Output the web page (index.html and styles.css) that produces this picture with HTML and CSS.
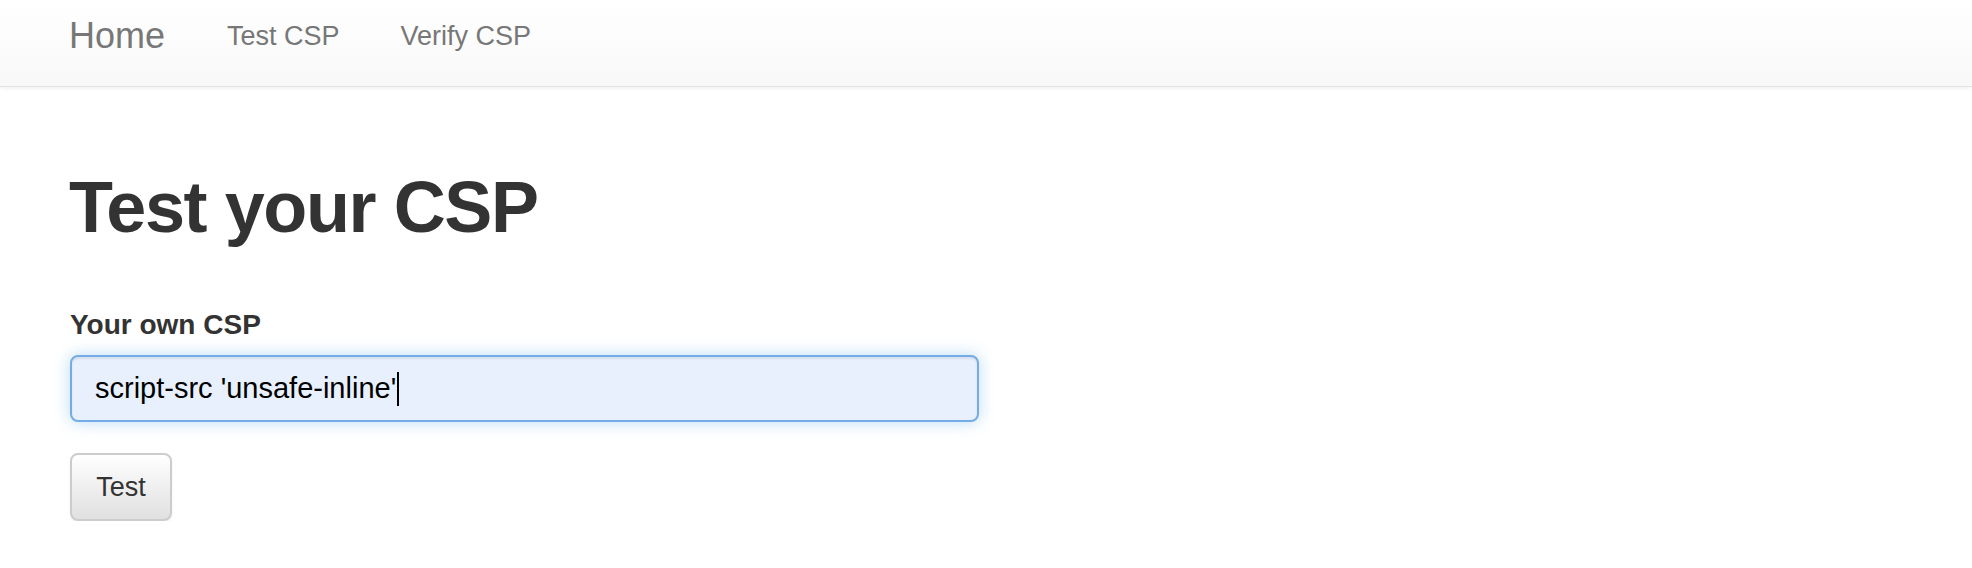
FILE: index.html
```html
<!DOCTYPE html>
<html>
  <head>
    <meta name="viewport" content="width=device-width, initial-scale=1" />
    <link rel="stylesheet" href="styles.css">
  </head>
  <body>
    <nav class="navbar">
      <a href="/" class="brand">Home</a>
      <a href="/test" class="nav-link">Test CSP</a>
      <a href="/verify" class="nav-link">Verify CSP</a>
    </nav>

    <div class="container">
      <h1>Test your CSP</h1>
      <form action="/test">
        <label for="csp">Your own CSP</label>
        <div class="form-control" id="csp">
          <span>script-src 'unsafe-inline'</span><span class="caret"></span>
        </div>
        <button type="submit" class="btn">Test</button>
      </form>
    </div>
  </body>
</html>
```

FILE: styles.css
```css
* {
  box-sizing: border-box;
}

body {
  margin: 0;
  background: #fff;
  font-family: "Liberation Sans", Arial, sans-serif;
  color: #333;
}

.navbar {
  display: flex;
  align-items: flex-start;
  gap: 61px;
  height: 87px;
  padding-left: 69px;
  background: linear-gradient(to bottom, #fff 0%, #f8f8f8 100%);
  border-bottom: 1px solid #e3e3e3;
  box-shadow: 0 1px 5px rgba(0, 0, 0, 0.075);
}

.navbar a {
  color: #777;
  text-decoration: none;
}

.brand {
  margin-top: 18px;
  font-size: 36px;
  line-height: 36px;
  margin-right: 1px;
}

.nav-link {
  margin-top: 23px;
  font-size: 27px;
  line-height: 27px;
}

.container {
  padding-left: 70px;
}

h1 {
  margin: 80px 0 0 -1px;
  font-size: 72px;
  line-height: 80px;
  font-weight: bold;
  letter-spacing: -1.4px;
}

label {
  display: block;
  margin-top: 58px;
  font-size: 28px;
  line-height: 40px;
  font-weight: bold;
}

.form-control {
  display: flex;
  align-items: center;
  width: 909px;
  height: 67px;
  margin-top: 10px;
  padding-left: 23px;
  background: #e8f0fe;
  border: 2px solid #74ade6;
  border-radius: 8px;
  box-shadow: inset 0 2px 2px rgba(0, 0, 0, 0.075), 0 0 16px rgba(102, 175, 233, 0.45);
  color: #000;
  font-size: 29px;
  line-height: 29px;
}

.caret {
  display: inline-block;
  width: 2px;
  height: 34px;
  margin-left: 1px;
  background: #000;
}

.btn {
  display: flex;
  align-items: center;
  justify-content: center;
  width: 102px;
  height: 68px;
  margin-top: 31px;
  padding: 0;
  background: linear-gradient(to bottom, #fff 0%, #e0e0e0 100%);
  border: 2px solid #ccc;
  border-radius: 8px;
  box-shadow: 0 1px 2px rgba(0, 0, 0, 0.075);
  color: #333;
  font-family: "Liberation Sans", Arial, sans-serif;
  font-size: 27px;
  line-height: 27px;
  cursor: pointer;
}
```
